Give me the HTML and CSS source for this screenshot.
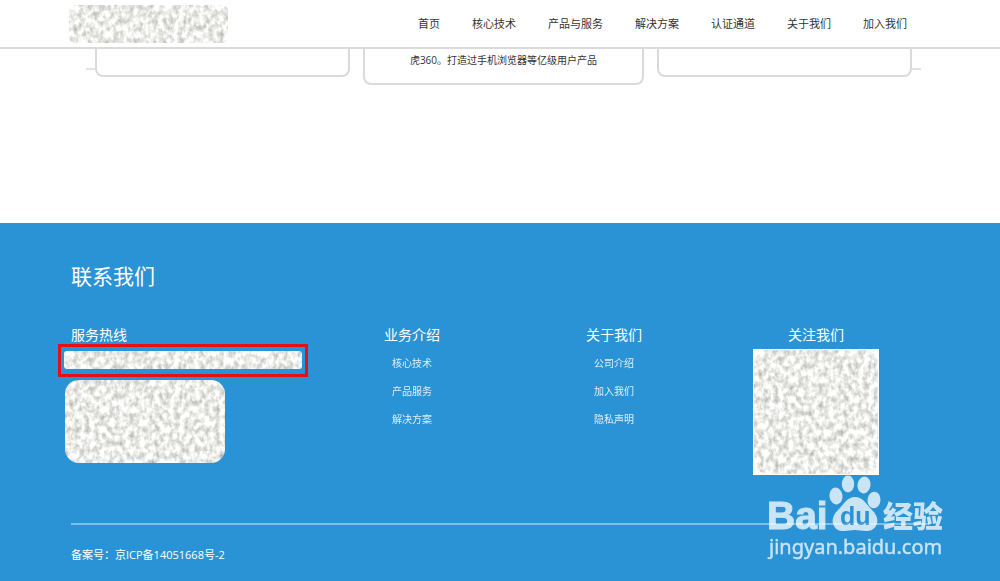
FILE: index.html
```html
<!DOCTYPE html>
<html lang="zh-CN">
<head>
<meta charset="utf-8">
<title>联系我们</title>
<link rel="stylesheet" href="styles.css">
</head>
<body>
<svg class="defs" width="0" height="0" aria-hidden="true">
  <filter id="grain" x="0" y="0" width="100%" height="100%" color-interpolation-filters="sRGB">
    <feTurbulence type="fractalNoise" baseFrequency="0.2 0.15" numOctaves="3" seed="8"/>
    <feColorMatrix values="0.55 0 0 0 0.65  0.55 0 0 0 0.65  0.55 0 0 0 0.64  0 0 0 0 1"/>
  </filter>
</svg>
<header class="header">
  <svg class="mosaic brand" aria-hidden="true"><rect width="100%" height="100%" filter="url(#grain)"/></svg>
  <nav class="nav">
    <a href="#">首页</a>
    <a href="#">核心技术</a>
    <a href="#">产品与服务</a>
    <a href="#">解决方案</a>
    <a href="#">认证通道</a>
    <a href="#">关于我们</a>
    <a href="#">加入我们</a>
  </nav>
</header>
<main class="cards">
  <span class="stub"></span>
  <div class="card"></div>
  <div class="card card-main"><p>虎360。打造过手机浏览器等亿级用户产品</p></div>
  <div class="card"></div>
  <span class="stub"></span>
</main>
<footer class="footer">
  <div class="inner">
    <h2 class="title">联系我们</h2>
    <div class="columns">
      <section class="hotline">
        <h3>服务热线</h3>
        <div class="highlight"><svg class="mosaic phone" aria-hidden="true"><rect width="100%" height="100%" filter="url(#grain)"/></svg></div>
        <svg class="mosaic address" aria-hidden="true"><rect width="100%" height="100%" filter="url(#grain)"/></svg>
      </section>
      <section class="column">
        <h3>业务介绍</h3>
        <a href="#">核心技术</a>
        <a href="#">产品服务</a>
        <a href="#">解决方案</a>
      </section>
      <section class="column">
        <h3>关于我们</h3>
        <a href="#">公司介绍</a>
        <a href="#">加入我们</a>
        <a href="#">隐私声明</a>
      </section>
      <section class="column">
        <h3>关注我们</h3>
        <div class="qr"><svg class="mosaic code" aria-hidden="true"><rect width="100%" height="100%" filter="url(#grain)"/></svg></div>
      </section>
    </div>
    <p class="record">备案号：京ICP备14051668号-2</p>
  </div>
  <svg class="watermark" width="184" height="90" viewBox="0 0 184 90">
    <g class="mark">
      <text class="bai" x="0" y="54">Bai</text>
      <ellipse cx="69" cy="21" rx="6.5" ry="8.5" transform="rotate(-8 69 21)"/>
      <ellipse cx="81" cy="9" rx="6.2" ry="8.5"/>
      <ellipse cx="97" cy="10" rx="6.5" ry="8.5" transform="rotate(10 97 10)"/>
      <ellipse cx="107" cy="25" rx="6.5" ry="8.3" transform="rotate(5 107 25)"/>
      <path d="M88 22C80 22 77 29 71 35C66 40 64 46 67 51C71 59 81 55 88 55C95 55 104 59 109 51C112 45 110 40 105 35C99 29 96 22 88 22Z"/>
      <text class="du" x="73" y="50">du</text>
      <text class="jingyan" x="116" y="52">经验</text>
      <text class="domain" x="2" y="79">jingyan.baidu.com</text>
    </g>
  </svg>
</footer>
</body>
</html>
```

FILE: styles.css
```css
* { box-sizing: border-box; }
body {
  margin: 0;
  min-height: 100vh;
  display: flex;
  flex-direction: column;
  background: #fff;
  color: #333;
  font-family: "Open Sans", "Noto Sans CJK SC", sans-serif;
}
h2, h3, p { margin: 0; font-weight: 400; }
a { color: inherit; text-decoration: none; }
.defs { position: absolute; }
.mosaic { display: block; overflow: hidden; }

.header {
  display: flex;
  align-items: center;
  justify-content: space-between;
  height: 49px;
  padding: 0 93px 0 69px;
  border-bottom: 2px solid #dadada;
}
.brand { width: 159px; height: 38px; border-radius: 6px; }
.nav { display: flex; gap: 32px; font-size: 11px; line-height: 16px; }

.cards {
  display: flex;
  align-items: flex-start;
  height: 174px;
  padding: 0 79px 0 86px;
}
.stub { width: 9px; height: 21px; border-bottom: 2px solid #e2e2e2; }
.card {
  flex: 255;
  height: 28px;
  border: 2px solid #dadada;
  border-top: 0;
  border-radius: 0 0 8px 8px;
}
.card-main {
  flex: 281;
  height: 36px;
  margin: 0 13px;
  padding-top: 3px;
  text-align: center;
  font-size: 10px;
  line-height: 16px;
}

.footer {
  position: relative;
  flex: 1;
  background: #2a93d5;
  color: #fff;
}
.inner { padding: 37px 71px 16px; }
.title { font-size: 21px; line-height: 32px; }
.columns {
  display: grid;
  grid-template-columns: 240px 1fr 1fr 1fr;
  margin-top: 32px;
  padding: 0 12px 48px 0;
  border-bottom: 2px solid #7fbee6;
}
h3 { font-size: 14px; line-height: 22px; }
.highlight {
  width: 250px;
  margin: -2px 0 0 -13px;
  padding: 4px 3px 5px;
  border: 3px solid #e60f14;
}
.phone { width: 100%; height: 18px; border-radius: 3px; }
.address { width: 160px; height: 83px; margin: 3px 0 0 -6px; border-radius: 14px; }
.column { display: flex; flex-direction: column; align-items: center; }
.column a { margin-top: 12px; font-size: 10px; line-height: 16px; opacity: 0.85; }
.column h3 + a { margin-top: 9px; }
.qr { width: 126px; margin-top: 3px; padding: 1px; background: #fff; }
.code { width: 100%; height: 124px; border-radius: 14px; }
.record { margin-top: 22px; font-size: 11px; line-height: 16px; }

.watermark { position: absolute; right: 49px; bottom: 16px; }
.mark { fill: #fff; opacity: 0.75; }
.bai { font: 700 39px "Liberation Sans", sans-serif; stroke: #fff; stroke-width: 1; }
.du { font: 700 25px "Liberation Sans", sans-serif; fill: #2a93d5; }
.jingyan { font: 900 30px "Noto Sans CJK SC", sans-serif; }
.domain { font: 400 20px "Noto Sans", sans-serif; stroke: #fff; stroke-width: 0.4; }
```
